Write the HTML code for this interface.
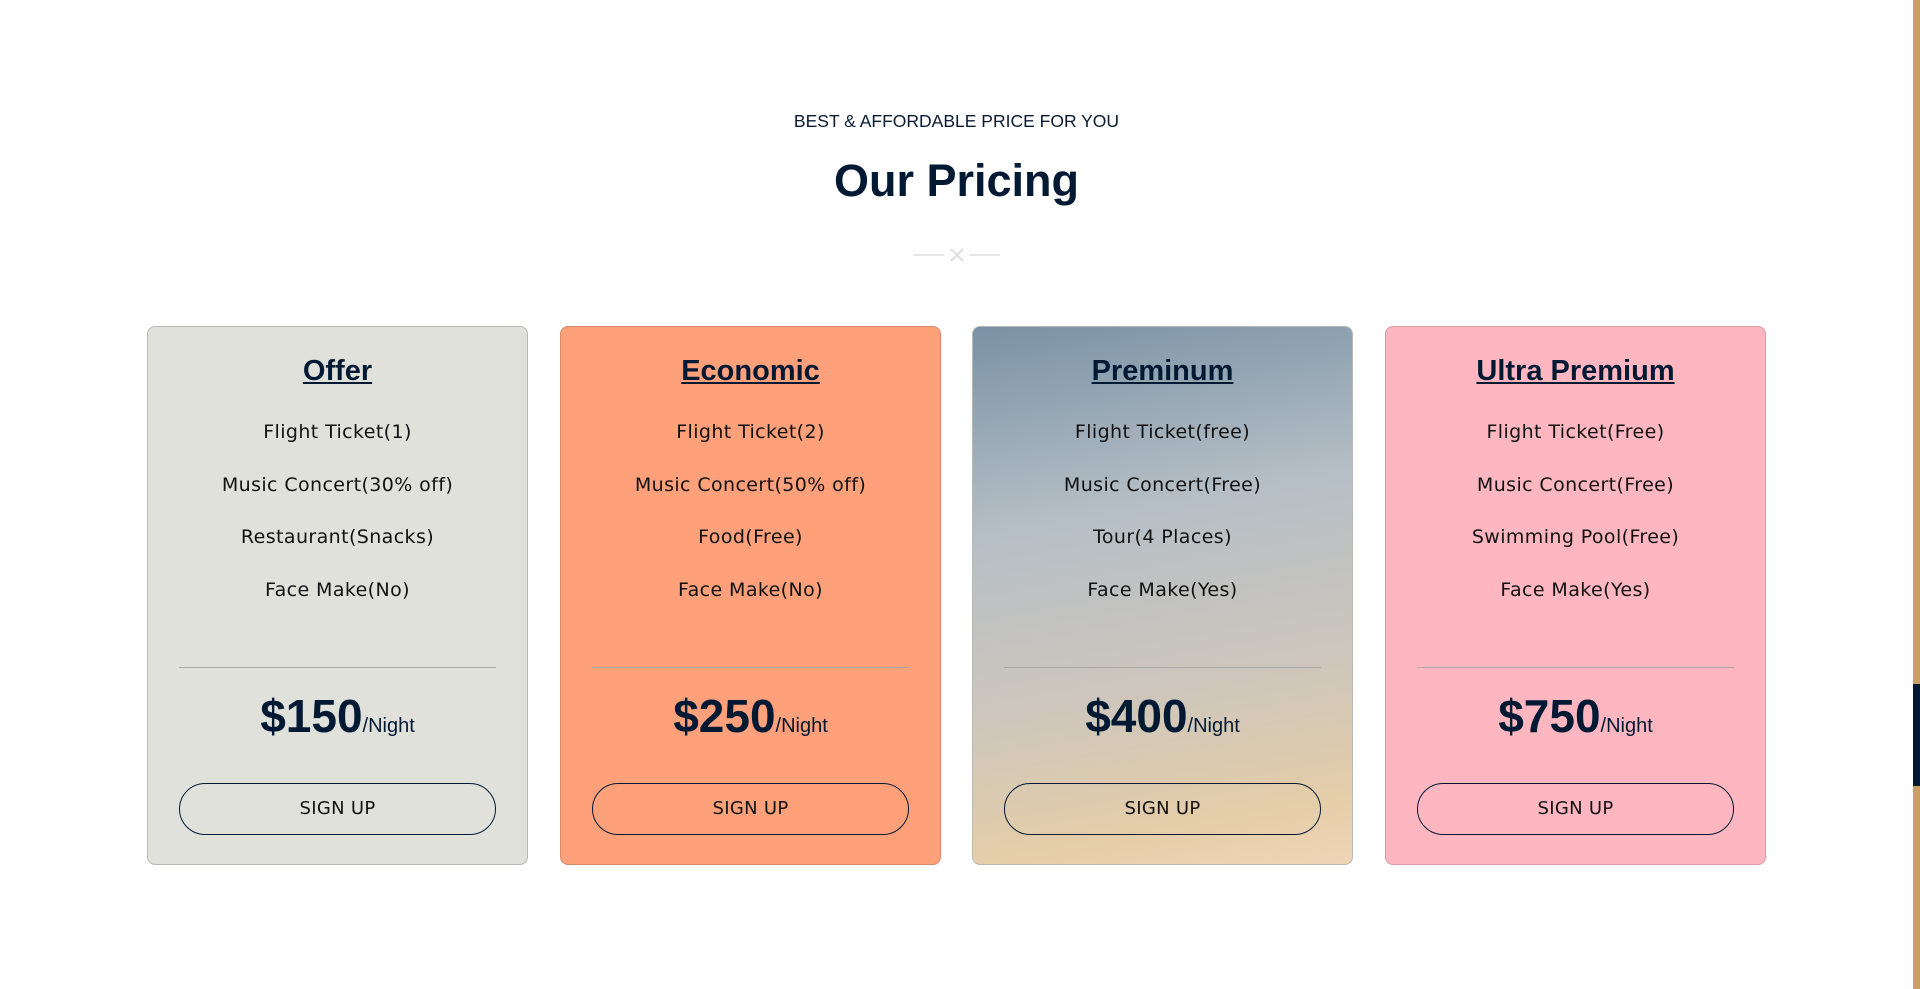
<!DOCTYPE html>
<html><head><meta charset="utf-8"><style>
*{margin:0;padding:0;box-sizing:border-box}
html,body{width:1920px;height:989px;overflow:hidden;background:#fff;font-family:"Liberation Sans",sans-serif;color:#0a1a33}
.sb{position:absolute;left:1913px;top:0;width:7px;height:989px;background:#c9a06a}
.sb i{position:absolute;left:0;top:684px;width:7px;height:102px;background:#021934}
.sub{position:absolute;top:111px;width:1913px;text-align:center;font-size:17.5px;color:#0a1a33}
h2{position:absolute;top:155px;width:1913px;text-align:center;font-size:45px;font-weight:bold;color:#021934}
.dv{position:absolute;top:246px;left:914px;width:86px;height:18px}
.card{position:absolute;top:326px;width:381px;height:539px;border:1px solid #b9b9b4;border-radius:8px;text-align:center}
.card h3{position:absolute;top:28px;width:100%;font-size:29px;font-weight:bold;text-decoration:underline;color:#021934}
.f{position:absolute;width:100%;font-family:"DejaVu Sans",sans-serif;font-size:19px;letter-spacing:.4px;color:#111}
.line{position:absolute;left:31px;right:31px;top:340px;height:1px;background:#a9a9a6}
.price{position:absolute;top:362px;width:100%;font-size:46px;font-weight:bold;color:#021934}
.price span{font-size:20px;font-weight:normal}
.btn{position:absolute;left:31px;right:31px;top:456px;height:52px;border:1px solid #021934;border-radius:26px;font-family:"DejaVu Sans",sans-serif;font-size:18px;letter-spacing:.3px;line-height:50px;color:#111}
</style></head><body>
<div class="sub">BEST &amp; AFFORDABLE PRICE FOR YOU</div>
<h2>Our Pricing</h2>
<svg class="dv" viewBox="0 0 86 18"><line x1="0" y1="9" x2="30" y2="9" stroke="#ddd" stroke-width="1.5"/><line x1="56" y1="9" x2="86" y2="9" stroke="#ddd" stroke-width="1.5"/><path d="M37 3L49 15M49 3L37 15" stroke="#ddd" stroke-width="2"/></svg>

<div class="card" style="left:147px;background:#e1e1dc">
<h3>Offer</h3>
<div class="f" style="top:94px">Flight Ticket(1)</div>
<div class="f" style="top:147px">Music Concert(30% off)</div>
<div class="f" style="top:199px">Restaurant(Snacks)</div>
<div class="f" style="top:252px">Face Make(No)</div>
<div class="line"></div>
<div class="price">$150<span>/Night</span></div>
<div class="btn">SIGN UP</div>
</div>

<div class="card" style="left:560px;background:#fea07a;border-color:#d98a6a">
<h3>Economic</h3>
<div class="f" style="top:94px">Flight Ticket(2)</div>
<div class="f" style="top:147px">Music Concert(50% off)</div>
<div class="f" style="top:199px">Food(Free)</div>
<div class="f" style="top:252px">Face Make(No)</div>
<div class="line"></div>
<div class="price">$250<span>/Night</span></div>
<div class="btn">SIGN UP</div>
</div>

<div class="card" style="left:972px;background:linear-gradient(170deg,#7a92a5 0%,#b6bfc6 35%,#cdc6bc 65%,#e4cda9 88%,#efd5b5 100%)">
<h3>Preminum</h3>
<div class="f" style="top:94px">Flight Ticket(free)</div>
<div class="f" style="top:147px">Music Concert(Free)</div>
<div class="f" style="top:199px">Tour(4 Places)</div>
<div class="f" style="top:252px">Face Make(Yes)</div>
<div class="line"></div>
<div class="price">$400<span>/Night</span></div>
<div class="btn">SIGN UP</div>
</div>

<div class="card" style="left:1385px;background:#feb6c1;border-color:#dc9aa4">
<h3>Ultra Premium</h3>
<div class="f" style="top:94px">Flight Ticket(Free)</div>
<div class="f" style="top:147px">Music Concert(Free)</div>
<div class="f" style="top:199px">Swimming Pool(Free)</div>
<div class="f" style="top:252px">Face Make(Yes)</div>
<div class="line"></div>
<div class="price">$750<span>/Night</span></div>
<div class="btn">SIGN UP</div>
</div>

<div class="sb"><i></i></div>
</body></html>
